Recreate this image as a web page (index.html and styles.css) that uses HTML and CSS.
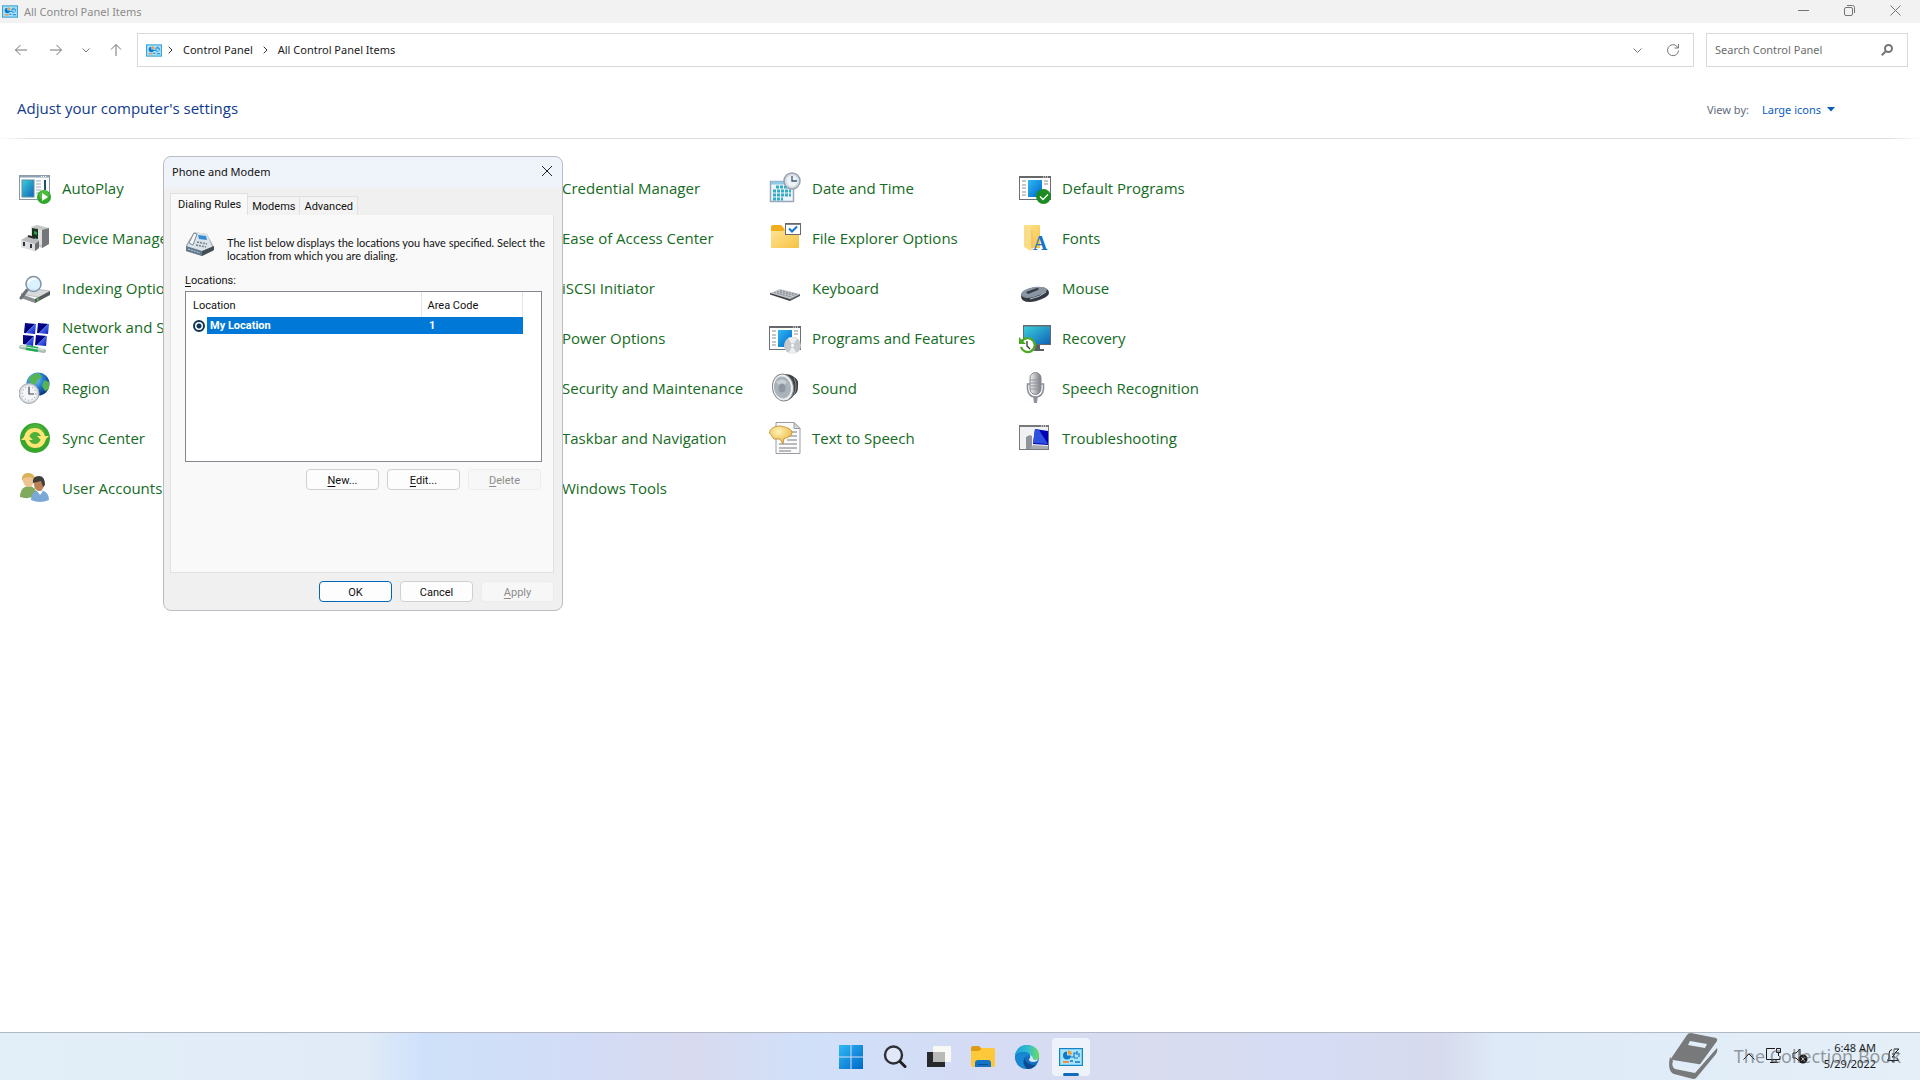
FILE: index.html
```
<!DOCTYPE html>
<html lang="en">
<head>
    <meta charset="UTF-8">
    <meta name="viewport" content="width=device-width, initial-scale=1.0">
    <title>All Control Panel Items</title>
    <link rel="stylesheet" href="styles.css">
</head>
<body>
    <svg class="defs" width="0" height="0" aria-hidden="true">
        <defs>
            <linearGradient id="blue" x1="0" y1="0" x2="1" y2="1">
                <stop offset="0" stop-color="#2fb9f5"/>
                <stop offset="1" stop-color="#0067c8"/>
            </linearGradient>
            <linearGradient id="screen" x1="0" y1="0" x2="1" y2="1">
                <stop offset="0" stop-color="#3ad0dc"/>
                <stop offset="1" stop-color="#0f62b8"/>
            </linearGradient>
            <linearGradient id="folder" x1="0" y1="0" x2="1" y2="1">
                <stop offset="0" stop-color="#ffe596"/>
                <stop offset="1" stop-color="#f5c243"/>
            </linearGradient>
            <linearGradient id="metal" x1="0" y1="0" x2="1" y2="0">
                <stop offset="0" stop-color="#f4f4f4"/>
                <stop offset="1" stop-color="#77797c"/>
            </linearGradient>
            <linearGradient id="navy" x1="0" y1="0" x2="1" y2="1">
                <stop offset="0" stop-color="#0a0aa0"/>
                <stop offset="0.5" stop-color="#000070"/>
                <stop offset="0.5" stop-color="#4a6ae8"/>
                <stop offset="1" stop-color="#0a18c0"/>
            </linearGradient>
            <linearGradient id="edge-top" x1="0" y1="0" x2="1" y2="0">
                <stop offset="0" stop-color="#1b9de2"/>
                <stop offset="0.6" stop-color="#35c1c9"/>
                <stop offset="1" stop-color="#6fdc57"/>
            </linearGradient>
            <radialGradient id="globe" cx="0.35" cy="0.3" r="0.8">
                <stop offset="0" stop-color="#8fd6ff"/>
                <stop offset="0.5" stop-color="#2179d0"/>
                <stop offset="1" stop-color="#07286f"/>
            </radialGradient>
            <radialGradient id="bubble" cx="0.4" cy="0.3" r="0.8">
                <stop offset="0" stop-color="#fff3b8"/>
                <stop offset="1" stop-color="#e9ae2c"/>
            </radialGradient>
            <symbol id="cp" viewBox="0 0 24 18">
                <rect x="0.5" y="0.5" width="23" height="17" fill="#7ed2f7" stroke="#1583bd"/>
                <rect x="2" y="2" width="20" height="14" fill="#a8e4fb"/>
                <path d="M8 3.500a4 4 0 1 0 4 4H8z" fill="#1178c9"/>
                <path d="M9 2.500a4 4 0 0 1 4 4H9z" fill="#f59b2b"/>
                <path d="M12 9h3V5h3M18 3v4M15 10h4M20 5v4" stroke="#1178c9" stroke-width="1.200" fill="none"/>
                <path d="M4 14h6" stroke="#f07f1c" stroke-width="1.600"/>
                <path d="M11 13h3M16 14h5" stroke="#1178c9" stroke-width="1.600"/>
            </symbol>
        </defs>
    </svg>

    <header class="titlebar">
        <svg class="cp-small"><use href="#cp"/></svg>
        <span class="title">All Control Panel Items</span>
        <div class="window-buttons">
            <button aria-label="Minimize"><svg width="11" height="11"><path d="M0 5.500h11"/></svg></button>
            <button aria-label="Restore"><svg width="11" height="11"><rect x="0.5" y="2.500" width="8" height="8" rx="1.500"/><path d="M3 .5h5.500a2 2 0 0 1 2 2V8"/></svg></button>
            <button aria-label="Close"><svg width="11" height="11"><path d="M.5 .5l10 10M10.500 .5l-10 10"/></svg></button>
        </div>
    </header>

    <nav class="toolbar">
        <button aria-label="Back"><svg width="14" height="14"><path d="M13 7H1.500M6.500 2l-5 5 5 5"/></svg></button>
        <button aria-label="Forward"><svg width="14" height="14"><path d="M1 7h11.500M7.500 2l5 5-5 5"/></svg></button>
        <button class="narrow" aria-label="Recent"><svg width="8" height="14"><path d="M.5 5.500L4 9l3.500-3.500"/></svg></button>
        <button aria-label="Up"><svg width="14" height="14"><path d="M7 13V1.500M2 6.500l5-5 5 5"/></svg></button>
        <div class="address">
            <svg class="cp-small"><use href="#cp"/></svg>
            <svg class="sep" width="5" height="8"><path d="M.7 .7L4 4 .7 7.300"/></svg>
            <a href="#">Control Panel</a>
            <svg class="sep" width="5" height="8"><path d="M.7 .7L4 4 .7 7.300"/></svg>
            <a href="#">All Control Panel Items</a>
            <button class="end" aria-label="Previous locations"><svg width="9" height="14"><path d="M.5 5.500l4 4 4-4"/></svg></button>
            <button aria-label="Refresh"><svg width="14" height="14"><path d="M12.500 7.500a5.500 5.500 0 1 1-1.600-4.200L12.300 5M12.500 1v4h-4"/></svg></button>
        </div>
        <div class="search">
            <input type="text" aria-label="Search Control Panel" placeholder="Search Control Panel">
            <svg width="12" height="12"><circle cx="7.500" cy="4.500" r="3.500"/><path d="M5 7L.8 11.200"/></svg>
        </div>
    </nav>

    <div class="heading">
        <h1>Adjust your computer's settings</h1>
        <span class="view-label">View by:</span>
        <button class="view">Large icons <svg width="8" height="5"><path d="M0 0h8L4 4.500z"/></svg></button>
    </div>

    <main class="items">
        <a class="item" href="#"><svg class="icon" viewBox="0 0 32 32">
            <rect x="0.5" y="3.500" width="30" height="24" fill="#fafcfd" stroke="#8b98a3"/><path d="M1 4.500h29" stroke="#8fa3b3" stroke-width="2"/><path d="M22 4.500h6" stroke="#fff" stroke-dasharray="1 1"/>
            <rect x="3" y="8" width="12" height="17" fill="url(#screen)" stroke="#5c8f9d"/><path d="M17 9h5M17 12h5M17 15h5M17 18h5M17 21h3" stroke="#9daab5"/><path d="M26 8v10" stroke="#22506b" stroke-width="2"/>
            <circle cx="25" cy="25" r="7" fill="#2fa82a"/><circle cx="25" cy="23" r="5" fill="#67cf52" opacity="0.5"/><path d="M23 21l6 4-6 4z" fill="#fff"/>
        </svg><span>AutoPlay</span></a>
        <a class="item col3" href="#"><span>Credential Manager</span></a>
        <a class="item" href="#"><svg class="icon" viewBox="0 0 32 32">
            <rect x="1.500" y="9.500" width="23" height="20" fill="#eef5fa" stroke="#9aa9ba" stroke-width="1.500"/><path d="M2 11h22" stroke="#8fcbe8" stroke-width="3"/>
            <path d="M7 15h15M4 19h18M4 23h18M4 27h10" stroke="#35acc5" stroke-width="3" stroke-dasharray="3 1"/>
            <circle cx="23" cy="9" r="8" fill="#d4dbe3" stroke="#98a2ae" stroke-width="1.500"/><circle cx="23" cy="9" r="5.500" fill="#edf2f6"/><path d="M23 4v5h5" stroke="#3a5778" fill="none" stroke-width="1.300"/>
        </svg><span>Date and Time</span></a>
        <a class="item" href="#"><svg class="icon" viewBox="0 0 32 32">
            <rect x="0.5" y="4.500" width="31" height="23" fill="#fff" stroke="#6f7073"/><path d="M0 5h32" stroke="#66686b" stroke-width="2"/><path d="M24 5h6" stroke="#fff" stroke-dasharray="1 1"/>
            <path d="M3 9h4M3 13h4M3 16h4M3 20h4M3 23h4M25 9h4M25 12h4" stroke="#8a8d91"/><rect x="9" y="8" width="14" height="17" fill="url(#blue)"/>
            <circle cx="24.500" cy="24.500" r="7.500" fill="#1c8b22"/><path d="M21 24.500l3 3 5-5" stroke="#fff" fill="none" stroke-width="1.300"/>
        </svg><span>Default Programs</span></a>

        <a class="item row" href="#"><svg class="icon" viewBox="0 0 32 32">
            <path d="M12 5l6-2 12 3v16l-7 4-11-5z" fill="#c5c6c7"/><path d="M23 8l7-2v16l-7 4z" fill="#747679"/><path d="M12 5l11 3v15l-11-3z" fill="#dedede"/><path d="M13 6l6 1v10l-6-1z" fill="#17341f"/><path d="M15 9l3 1v3l-3-1z" fill="#30a052"/>
            <path d="M2 18l7-4 11 4v8l-4 3L2 25z" fill="#b9bbbd"/><path d="M2 18l14 4v7L2 25z" fill="#dedfe0"/><path d="M16 22l4-3v7l-4 3z" fill="#6d6f73"/><path d="M5 20v4M12 22v4" stroke="#303337" stroke-width="2"/><path d="M9 14l7 2" stroke="#292d31" stroke-width="2"/>
        </svg><span>Device Manager</span></a>
        <a class="item col3" href="#"><span>Ease of Access Center</span></a>
        <a class="item" href="#"><svg class="icon" viewBox="0 0 32 32">
            <path d="M2 5q0-2 2-2h7q2 0 3 2l2 3h14v10H2z" fill="#f1ad1c"/><path d="M2 9h12l3-2h13v18q0 1-1 1H3q-1 0-1-1z" fill="url(#folder)"/>
            <rect x="16.500" y="2" width="15" height="10.500" fill="#fff" stroke="#68696c"/><path d="M16 1.800h16" stroke="#68696c" stroke-width="1.600"/><path d="M20 6.500l3 3 5-5" stroke="#1674d1" fill="none" stroke-width="2"/>
        </svg><span>File Explorer Options</span></a>
        <a class="item" href="#"><svg class="icon" viewBox="0 0 32 32">
            <path d="M5 3h16v23H9z" fill="url(#folder)"/><path d="M5 3l7 5v21l-7-4z" fill="#f8dc87"/><path d="M13 8v20" stroke="#e5bf63"/>
            <text x="14" y="28" class="font-a">A</text>
        </svg><span>Fonts</span></a>

        <a class="item row" href="#"><svg class="icon" viewBox="0 0 32 32">
            <path d="M2 22l8-6 21 3-8 7z" fill="#d8dadc" stroke="#909498" stroke-width="0.5"/><path d="M2 22l14 5v4L2 26z" fill="#8a8d90"/><path d="M16 27l15-8v4l-15 8z" fill="#55595b"/><path d="M18 27l2-1v2l-2 1z" fill="#4dcc3f"/>
            <path d="M8 18l-6 8" stroke="#6c7177" stroke-width="3" stroke-linecap="round"/><circle cx="14.500" cy="12" r="7.500" fill="#d8efff" fill-opacity="0.9" stroke="#8194a5" stroke-width="1.500"/><path d="M9 11q2-5 8-4" stroke="#fff" fill="none" stroke-width="2"/>
        </svg><span>Indexing Options</span></a>
        <a class="item col3" href="#"><span>iSCSI Initiator</span></a>
        <a class="item" href="#"><svg class="icon" viewBox="0 0 32 32">
            <path d="M1 21l10-4 20 5-10 5z" fill="#c3c6ca"/><path d="M1 21l20 6v2L1 22.500z" fill="#3a3d41"/><path d="M21 27l10-5v2l-10 5z" fill="#55595e"/><path d="M5 20.500l18 4.500M8 19.500l18 4M11 18.500l17 4" stroke="#8d9298" stroke-width="1.200" stroke-dasharray="2 1"/>
        </svg><span>Keyboard</span></a>
        <a class="item" href="#"><svg class="icon" viewBox="0 0 32 32">
            <path d="M2 24q0-4 7-7 5-2 13-2 8 1 8 6 0 3-7 6-7 3-12 3-9 0-9-6z" fill="#353a41"/><path d="M2 22q1-4 9-6 6-2 12-1 5 1 5 3-1 3-8 5-7 3-12 3-6-1-6-4z" fill="#8995a2"/><path d="M7 20l11-4q3 0 1 2l-10 4z" fill="#343b44"/><path d="M11 27q10-2 16-7" stroke="#b7c3cd" fill="none"/>
        </svg><span>Mouse</span></a>

        <a class="item row wrap" href="#"><svg class="icon" viewBox="0 0 32 32">
            <path d="M6 1l11 1-1 10-11-1z" fill="url(#navy)"/><path d="M19 1l11 1-1 10-11-1z" fill="url(#navy)"/><path d="M4 13l11 1-1 10-10-2z" fill="url(#navy)"/><path d="M17 13l11 1-1 10-11-1z" fill="url(#navy)"/>
            <path d="M2 25l23 4" stroke="#a9bfb2" stroke-width="4" stroke-linecap="round"/><path d="M7 25.500l12 2" stroke="#1dab53" stroke-width="5"/><path d="M1 24l24 4" stroke="#e6eeea"/>
        </svg><span>Network and Sharing Center</span></a>
        <a class="item col3" href="#"><span>Power Options</span></a>
        <a class="item" href="#"><svg class="icon" viewBox="0 0 32 32">
            <rect x="0.500" y="4.500" width="31" height="23" fill="#fff" stroke="#6f7073"/><path d="M0 5h32" stroke="#66686b" stroke-width="2"/><path d="M24 5h6" stroke="#fff" stroke-dasharray="1 1"/>
            <path d="M3 9h4M3 13h4M3 16h4M3 20h4M3 23h4M25 9h4M25 12h4" stroke="#8a8d91"/><rect x="9" y="8" width="14" height="17" fill="url(#blue)"/>
            <circle cx="23.500" cy="23.500" r="8.500" fill="#c6cacd"/><path d="M23.500 23.500L19 16q5-2 9 1zM23.500 23.500l4 7.500q-4 2-8 0z" fill="#eceeef"/><circle cx="23.500" cy="23.500" r="2" fill="#fff" stroke="#aaa" stroke-width="0.500"/>
        </svg><span>Programs and Features</span></a>
        <a class="item" href="#"><svg class="icon" viewBox="0 0 32 32">
            <rect x="4" y="3" width="28" height="20" fill="#65696d"/><rect x="5" y="4.500" width="26" height="17.500" fill="url(#screen)"/><path d="M16 23h5v4h4v2H14v-2h2z" fill="#5a5e62"/>
            <circle cx="8.500" cy="23.500" r="8" fill="#fff"/><path d="M3 19a7 7 0 1 1-1 6" fill="none" stroke="#4aa824" stroke-width="2.300"/><path d="M0 15v7h7z" fill="#4aa824"/><path d="M8 19v5l3 3" stroke="#333" fill="none" stroke-width="1.300"/>
        </svg><span>Recovery</span></a>

        <a class="item row" href="#"><svg class="icon" viewBox="0 0 32 32">
            <circle cx="19" cy="12" r="11.500" fill="url(#globe)"/><path d="M10 6q5-5 10-5l3 4-4 3-3 5-5-2zM25 8l5 2v7l-4 2-3-5z" fill="#55b551"/>
            <circle cx="10" cy="21.500" r="10" fill="#d6dade" stroke="#a4aab0"/><circle cx="10" cy="21.500" r="8" fill="#f3f5f6"/><path d="M10 15v7h5" stroke="#3a4652" fill="none" stroke-width="1.200"/><circle cx="10" cy="21.500" r="6.800" fill="none" stroke="#7f878e" stroke-dasharray="1 2.500"/>
        </svg><span>Region</span></a>
        <a class="item col3" href="#"><span>Security and Maintenance</span></a>
        <a class="item" href="#"><svg class="icon" viewBox="0 0 32 32">
            <path d="M15 2q7 0 10 3 5 2 4 10 0 6-4 8-4 6-10 6z" fill="#3f4143"/><path d="M25 6q4 8 0 17" stroke="#85898b" fill="none"/>
            <ellipse cx="14" cy="15.500" rx="10.500" ry="13.500" fill="#eceeef" stroke="#888c8f" transform="rotate(-8 14 15.500)"/><ellipse cx="13.500" cy="15.500" rx="8.500" ry="11" fill="#aab3ba" transform="rotate(-8 13.500 15.500)"/><path d="M7 10q6-5 11 0l-5 6z" fill="#c9d1d7"/><ellipse cx="13" cy="16" rx="3.500" ry="4.500" fill="#8e979f"/>
        </svg><span>Sound</span></a>
        <a class="item" href="#"><svg class="icon" viewBox="0 0 32 32">
            <rect x="11" y="0.500" width="11" height="22" rx="5.500" fill="url(#metal)" stroke="#83868f"/><path d="M11 8h11M11 11h11M11 14h11M11 17h11" stroke="#8e919a"/>
            <path d="M11 12H8.500v5q1 8 8 8t8-8v-5H22" stroke="#8c8f98" stroke-width="1.600" fill="none"/><path d="M14 24h5l-1 7h-3z" fill="#9194a0"/>
        </svg><span>Speech Recognition</span></a>

        <a class="item row" href="#"><svg class="icon" viewBox="0 0 32 32">
            <circle cx="16" cy="16" r="15" fill="#38a52d"/><circle cx="16" cy="12" r="10" fill="#62be45" opacity="0.500"/>
            <path d="M5 15q2-9 11-9 7 0 10 8h4l-6 6-6-6h4q-2-4-6-4t-6 5z" fill="#ffe575"/><path d="M27 17q-2 9-11 9-7 0-10-8H2l6-6 6 6h-4q2 4 6 4t6-5z" fill="#ffe575"/>
        </svg><span>Sync Center</span></a>
        <a class="item col3" href="#"><span>Taskbar and Navigation</span></a>
        <a class="item" href="#"><svg class="icon" viewBox="0 0 32 32">
            <path d="M7 .5h18l6 6v25H7z" fill="#fbfbfc" stroke="#999da2"/><path d="M25 .5v6h6z" fill="#d7dadd" stroke="#999da2"/><path d="M21 10h7M21 14h7M18 18h10M10 22h18M10 26h18M10 29h12" stroke="#777b80"/>
            <path d="M11.500 4C5 4 .5 7 .5 11t4.500 6h6l3 5 1-5.500q8-1.500 8-6T11.500 4z" fill="url(#bubble)" stroke="#bb8624" stroke-width="0.800"/>
        </svg><span>Text to Speech</span></a>
        <a class="item" href="#"><svg class="icon" viewBox="0 0 32 32">
            <rect x="0.500" y="3.500" width="29" height="24" fill="#f0f1f2" stroke="#77797d"/><path d="M0 4h30" stroke="#77797d" stroke-width="2"/><path d="M22 4h6" stroke="#fff" stroke-dasharray="1 1"/>
            <path d="M16 7l13 2v14l-15-1z" fill="#0000b8"/><path d="M16 7l4 1 9 14-15-1z" fill="#2d50df"/><path d="M7 15l4-2 2 1v13H7z" fill="#90949a"/><path d="M14 23l15 1v3H11z" fill="#a7acb2"/>
        </svg><span>Troubleshooting</span></a>

        <a class="item row" href="#"><svg class="icon" viewBox="0 0 32 32">
            <path d="M1 23q1-8 8-9 8 0 9 9-8 5-17 2z" fill="#82aa5d"/><ellipse cx="9.500" cy="8" rx="5.500" ry="7" fill="#ecc391"/><path d="M3 9Q2 1 9 1t7 7l-4-3-7 1z" fill="#d9b357"/>
            <path d="M12 27q0-8 9-9 9 1 9 10-9 4-18 0z" fill="#7aa9d8"/><ellipse cx="20" cy="12" rx="5" ry="7" fill="#bd8155"/><path d="M14 11q-1-7 6-7 6 0 6 9l-2 2-2-6z" fill="#3f3d3c"/><path d="M18 19l3 4 3-4" fill="#fff"/>
        </svg><span>User Accounts</span></a>
        <a class="item col3" href="#"><span>Windows Tools</span></a>
    </main>

    <form class="dialog" role="dialog" aria-label="Phone and Modem">
        <div class="dialog-title">
            <span>Phone and Modem</span>
            <button type="button" aria-label="Close dialog"><svg width="12" height="12"><path d="M1 1l10 10M11 1L1 11"/></svg></button>
        </div>
        <div class="tabs" role="tablist">
            <button type="button" class="active" role="tab">Dialing Rules</button>
            <button type="button" role="tab">Modems</button>
            <button type="button" role="tab">Advanced</button>
        </div>
        <div class="panel">
            <div class="intro">
                <svg width="30" height="26" viewBox="0 0 30 26">
                    <path d="M1 14l8-13 13 2 7 13-1 4-11 5L1 20z" fill="#a9b4bf"/><path d="M9 1l13 2 5 13-10 4-15-4z" fill="#dce3e8"/><path d="M1 15l16 5v5L1 20z" fill="#65798b"/><path d="M17 20l12-5v4l-12 6z" fill="#454d55"/>
                    <path d="M13 4l8 1 1 4-8-1z" fill="#338ad4"/><path d="M4 12L9 2l3 1-4 11z" fill="#f6f8f9" stroke="#60707d" stroke-width="0.800"/><path d="M12 11l10 2M11 14l10 2" stroke="#71808d" stroke-width="1.500" stroke-dasharray="2 1"/><path d="M3 18l12 4" stroke="#b8d2e4" stroke-dasharray="2 1"/>
                </svg>
                <p>The list below displays the locations you have specified. Select the location from which you are dialing.</p>
            </div>
            <div class="list-label"><u>L</u>ocations:</div>
            <div class="list">
                <table>
                    <thead>
                        <tr><th class="name">Location</th><th>Area Code</th></tr>
                    </thead>
                    <tbody>
                        <tr>
                            <td class="name"><input type="radio" id="my-location" name="location" checked><label for="my-location">My Location</label></td>
                            <td class="code">1</td>
                        </tr>
                    </tbody>
                </table>
            </div>
            <div class="buttons">
                <button type="button"><u>N</u>ew...</button>
                <button type="button"><u>E</u>dit...</button>
                <button type="button" disabled><u>D</u>elete</button>
            </div>
        </div>
        <div class="buttons footer">
            <button type="button" class="default">OK</button>
            <button type="button">Cancel</button>
            <button type="button" disabled><u>A</u>pply</button>
        </div>
    </form>

    <footer class="taskbar">
        <div class="apps">
            <button aria-label="Start"><svg width="24" height="24"><path d="M0 0h11.500v11.500H0zM12.500 0H24v11.500H12.500zM0 12.500h11.500V24H0zM12.500 12.500H24V24H12.500z" fill="url(#blue)"/></svg></button>
            <button aria-label="Search"><svg width="24" height="24"><circle cx="10.500" cy="10" r="8.500" fill="#eef2fb" fill-opacity="0.500" stroke="#2d3035" stroke-width="2.400"/><path d="M17 16.500l5 5" stroke="#222" stroke-width="3" stroke-linecap="round"/></svg></button>
            <button aria-label="Task View"><svg width="24" height="24"><path d="M6 1h18v16H6z" fill="#f8f8f5"/><path d="M0 7h18v15H0z" fill="#28292b"/><path d="M6 7h12v10H6z" fill="#b9b9b7"/></svg></button>
            <button aria-label="File Explorer"><svg width="24" height="24"><path d="M0 3q0-2 2-2h6l3 3h11q2 0 2 2v4H0z" fill="#dd9c13"/><path d="M0 6h8l3-3h11q2 0 2 2v15q0 2-2 2H2q-2 0-2-2z" fill="#fdc93b"/><path d="M4 22v-4q0-3 3-3h10q3 0 3 3v4z" fill="#1473c4"/><path d="M7 19.500h10" stroke="#0b508f"/></svg></button>
            <button aria-label="Edge"><svg width="24" height="24"><circle cx="12" cy="12" r="12" fill="#1470c0"/><path d="M0 11Q2 0 12 0q12 1 12 11 0 5-6 5-4 0-4-2 2-1 1-4-2-3-6-3-6 0-9 4z" fill="url(#edge-top)"/><path d="M0 12q3-5 9-5 5 0 6 4-4-2-5 2 0 5 5 6.500 4 1 7-1-4 6-10 5.500Q1 23 0 12z" fill="#1787d2"/><path d="M10 12q-4 6 2 12 6 0 10-5-3 2-7 0-6-2-5-7z" fill="#0d4a92"/><path d="M14 14q2-1 1-4 3 1 3 4 3 2 5.500-.5-1 3.500-5.500 3.500-4 0-4-3z" fill="#d8e6f7"/></svg></button>
            <button class="running" aria-label="Control Panel"><svg width="24" height="18"><use href="#cp"/></svg></button>
        </div>
        <div class="watermark">
            <svg width="50" height="46" viewBox="0 0 50 46"><path d="M23 0l25 5q2 1 1 3L33 30q-1 2-3 1L5 27Q2 27 4 24L19 2q1-2 4-2z" fill="#77797b"/><path d="M22 8l17 3-2 4-17-3z" fill="#e4eef8"/><path d="M2 24Q-1 38 6 41l19 5q3 0 4-2l19-23q2-3 1-6L27 40 7 36q-4-2-2-8z" fill="#77797b"/></svg>
            <span>The Collection Book</span>
        </div>
        <div class="tray">
            <button aria-label="Hidden icons"><svg width="12" height="12"><path d="M.5 9.500L6 4l5.500 5.500"/></svg></button>
            <button aria-label="Network"><svg width="17" height="17"><path d="M10 1.500H1.500v11H15V9M5 15.500h8M7 13v2M11 13v2M11.500 1.500h4v4h-4zM13.500 6v3"/></svg></button>
            <button aria-label="Volume"><svg width="16" height="16"><path d="M8 1L4 5H1v5h3l3 3"/><path d="M8 1v6"/><circle cx="11" cy="11" r="4.500" fill="#1b1b1b" stroke="none"/><path d="M9.500 9.500l3 3M12.500 9.500l-3 3" stroke="#fff"/></svg></button>
            <div class="clock"><div>6:48 AM</div><div>5/29/2022</div></div>
            <button aria-label="Notifications"><svg width="15" height="16"><path d="M6 1.500Q3 2 3 6v4l-1.500 2.500h11L11 10M5.500 13q1.500 2.500 3 0M8 1h5l-4 4h4M6 6h3l-3 3h3"/></svg></button>
        </div>
    </footer>
</body>
</html>
```
FILE: styles.css
```
* {
    box-sizing: border-box;
}

html, body {
    height: 100%;
    margin: 0;
}

body {
    display: flex;
    flex-direction: column;
    overflow: hidden;
    background-color: #fff;
    font-family: "Noto Sans", sans-serif;
    font-size: 11px;
    color: #1b1b1b;
}

button {
    margin: 0;
    padding: 0;
    border: none;
    background: none;
    font: inherit;
    color: inherit;
}

a {
    color: inherit;
    text-decoration: none;
}

svg {
    display: block;
    flex: none;
}

.defs {
    position: absolute;
}

.cp-small {
    width: 16px;
    height: 13px;
}

/* window chrome */
.titlebar {
    display: flex;
    align-items: center;
    height: 23px;
    padding-left: 2px;
    background-color: #f2f2f2;
    color: #8b8b8b;
}

.titlebar .title {
    margin-left: 6px;
}

.window-buttons {
    display: flex;
    margin-left: auto;
    padding: 0 2px 2px 0;
}

.window-buttons button {
    display: flex;
    justify-content: center;
    width: 46px;
}

.window-buttons svg,
.toolbar svg path,
.toolbar svg circle {
    fill: none;
    stroke: #757575;
}

.toolbar {
    display: flex;
    align-items: center;
    padding: 10px 12px 0 3px;
}

.toolbar button {
    display: flex;
    justify-content: center;
    width: 35px;
}

.toolbar .narrow {
    width: 25px;
}

.address {
    display: flex;
    flex: 1;
    align-items: center;
    height: 34px;
    margin: 0 12px 0 4px;
    padding: 0 3px 0 8px;
    border: 1px solid #d9d9d9;
}

.address a {
    padding: 0 4px 2px 0;
}

.address .sep {
    margin: 0 10px 0 6px;
}

.address .sep path {
    stroke: #333;
}

.address .end {
    margin-left: auto;
}

.search {
    display: flex;
    align-items: center;
    width: 202px;
    height: 34px;
    padding: 0 14px 0 8px;
    border: 1px solid #d9d9d9;
}

.search input {
    flex: 1;
    min-width: 0;
    padding: 0 0 2px;
    border: none;
    outline: none;
    font: inherit;
}

.search input::placeholder {
    color: #6d6d6d;
}

.search svg path,
.search svg circle {
    stroke-width: 2;
}

.heading {
    display: flex;
    align-items: center;
    height: 72px;
    padding: 10px 85px 0 17px;
    border-bottom: 1px solid;
    border-image: linear-gradient(to right, #fff, #dcdfe0 32px, #dcdfe0 calc(100% - 32px), #fff) 1;
}

.heading h1 {
    flex: 1;
    margin: 0;
    font-family: "Open Sans", sans-serif;
    font-size: 15px;
    font-weight: normal;
    color: #0f3a8c;
}

.view-label {
    margin-right: 13px;
    padding-top: 3px;
    color: #5f6b7c;
}

.view {
    display: flex;
    gap: 6px;
    align-items: center;
    padding-top: 3px;
    color: #0b5cbf;
}

.view svg {
    fill: #0b5cbf;
}

/* icon list */
.items {
    display: grid;
    grid-template-columns: repeat(auto-fill, 250px);
    grid-auto-rows: 50px;
    flex: 1;
    align-content: start;
    padding: 24px 19px;
}

.item {
    display: flex;
    gap: 11px;
    align-items: center;
    font-family: "Open Sans", sans-serif;
    font-size: 15px;
    line-height: 21px;
    color: #156b23;
}

.item.row {
    grid-column: 1;
}

.item.col3 {
    grid-column: 3;
    padding-left: 43px;
}

.item.wrap {
    padding-right: 40px;
}

.icon {
    width: 32px;
    height: 32px;
}

.font-a {
    font: bold 20px "Liberation Serif", serif;
    fill: #1475c6;
}

/* Phone and Modem */
.dialog {
    position: absolute;
    left: 163px;
    top: 156px;
    width: 400px;
    padding: 0 8px 8px 6px;
    border: 1px solid #b9bcc2;
    border-radius: 8px;
    background: linear-gradient(#eff3fa 30px, #f0f0f0 31px);
    font-family: Roboto, sans-serif;
    font-size: 11px;
    color: #111;
}

.dialog u {
    text-underline-offset: 2px;
}

.dialog-title {
    display: flex;
    align-items: center;
    justify-content: space-between;
    height: 28px;
    padding: 0 1px 0 2px;
    font-family: "Noto Sans", sans-serif;
}

.dialog-title svg {
    stroke: #222;
}

.tabs {
    display: flex;
    align-items: flex-end;
    height: 30px;
}

.tabs button {
    height: 19px;
    padding: 0 4px;
    border: 1px solid #e0e0e0;
    border-width: 1px 1px 0 0;
    background-color: #f3f3f3;
}

.tabs .active {
    height: 22px;
    padding: 0 6px 0 7px;
    border-left-width: 1px;
    background-color: #f9f9f9;
}

.panel {
    height: 358px;
    padding: 16px 0 0 14px;
    border: 1px solid #e0e0e0;
    border-top: none;
    background-color: #f9f9f9;
}

.intro {
    display: flex;
    gap: 12px;
}

.intro p {
    margin: 5px 0 0;
    font-family: Lato, sans-serif;
    line-height: 13px;
}

.list-label {
    margin: 12px 0 4px;
    line-height: 13px;
}

.list {
    height: 171px;
    margin-right: 11px;
    border: 1px solid #828790;
    background-color: #fff;
}

.list table {
    width: 337px;
    border-collapse: collapse;
}

.list th {
    height: 25px;
    padding: 2px 6px 0;
    border-right: 1px solid #e5e5e5;
    font-weight: normal;
    text-align: left;
}

.list th.name {
    width: 235px;
    padding-left: 7px;
}

.list td {
    height: 17px;
    padding: 0 8px;
    background-color: #0078d7;
    font-weight: bold;
    color: #fff;
}

.list td.name {
    padding: 0;
    background: linear-gradient(to right, #fff 21px, #0078d7 21px);
}

.list label {
    margin-left: 5px;
    vertical-align: middle;
}

.list input {
    appearance: none;
    width: 12px;
    height: 12px;
    margin: 0 0 0 7px;
    border: 2px solid #0c3556;
    border-radius: 50%;
    background: radial-gradient(#0c3556 2px, #fff 3px);
    vertical-align: middle;
}

.buttons {
    display: flex;
    gap: 8px;
    justify-content: flex-end;
    margin: 7px 12px 0 0;
}

.buttons button {
    width: 73px;
    height: 21px;
    padding-top: 1px;
    border: 1px solid #d0d0d0;
    border-radius: 4px;
    background-color: #fdfdfd;
}

.buttons button:disabled {
    border-color: #ececec;
    background-color: #f7f7f7;
    color: #8c8c8c;
}

.buttons .default {
    border-color: #0067b8;
}

.footer {
    margin: 8px 0 0;
}

/* taskbar */
.taskbar {
    display: grid;
    grid-template-columns: 1fr auto 1fr;
    align-items: center;
    position: relative;
    height: 48px;
    border-top: 1px solid #b3b8c6;
    background: linear-gradient(to right, #e2eef8, #e0ebf7 19%, #cfe1fa 22%, #d2dcf6 30%, #d8daef 36%, #d1e0f9 42%, #d4dcf5 50%, #d9dcef 60%, #d5dcf4 68%, #d7daed 75%, #deeaf7 78%, #e4eff8);
}

.apps {
    display: flex;
    grid-column: 2;
    gap: 6px;
    padding-left: 2px;
}

.apps button {
    display: flex;
    align-items: center;
    justify-content: center;
    width: 38px;
    height: 38px;
}

.apps .running {
    position: relative;
    border-radius: 4px;
    background-color: #edf2fb;
}

.running::after {
    content: "";
    position: absolute;
    bottom: 0;
    width: 16px;
    height: 3px;
    border-radius: 2px;
    background-color: #0f6cbd;
}

.tray {
    display: flex;
    align-items: center;
    justify-content: flex-end;
    gap: 10px;
    padding: 0 19px 2px 0;
}

.tray button svg {
    fill: none;
    stroke: #1b1b1b;
}

.clock {
    margin-left: 6px;
    line-height: 16px;
    text-align: right;
}

/* sits over the tray */
.watermark {
    position: absolute;
    top: 0;
    right: 19px;
    display: flex;
    gap: 16px;
    align-items: center;
    font-size: 18px;
    color: rgba(90, 92, 95, 0.6);
}
```
